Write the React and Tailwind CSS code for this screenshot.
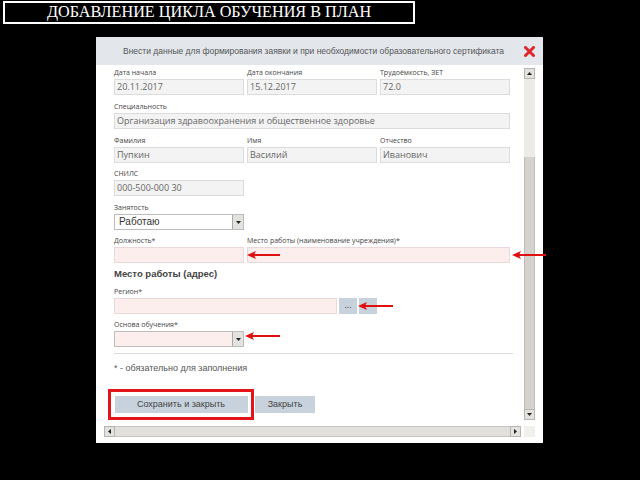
import React from 'react';

const ui = { fontFamily: '"Open Sans", "DejaVu Sans", sans-serif' };
const arial = { fontFamily: '"Liberation Sans", Arial, sans-serif' };

function Label({ children, className = '' }) {
  return (
    <div className={`h-[12px] text-[7px] leading-[12px] text-[#444] ${className}`}>{children}</div>
  );
}

function Field({ value = '', w = 'w-[130px]', tone = 'gray' }) {
  const bg = tone === 'pink' ? 'bg-[#fdeeee] border-[#ecd8d8]' : 'bg-[#f3f3f3] border-[#dcdcdc]';
  return (
    <div className={`h-[16px] ${w} border ${bg} px-[2px] text-[9px] leading-[14px] text-[#666] whitespace-nowrap`}>{value}</div>
  );
}

function Select({ value = '', tone = 'white' }) {
  const bg = tone === 'pink' ? 'bg-[#fdeeee]' : 'bg-white';
  return (
    <div className={`h-[16px] w-[130px] border border-[#bdbdbd] ${bg} flex`}>
      <div className="flex-1 px-[4px] text-[10px] leading-[14px] text-[#333]" style={arial}>{value}</div>
      <div className="w-[11px] h-[14px] bg-[#e4e2de] border-l border-[#a9a9a9] flex items-center justify-center">
        <svg width="5" height="3" viewBox="0 0 5 3"><path d="M0 0h5L2.5 3z" fill="#222" /></svg>
      </div>
    </div>
  );
}

function Arrow({ x1, x2, y }) {
  return (
    <g>
      <line x1={x1 + 6} y1={y} x2={x2} y2={y} stroke="#e01010" strokeWidth="2" />
      <path d={`M${x1} ${y} L${x1 + 9} ${y - 4} L${x1 + 7} ${y} L${x1 + 9} ${y + 4} Z`} fill="#e01010" />
    </g>
  );
}

export default function App() {
  return (
    <div className="relative w-[640px] h-[480px] bg-black overflow-hidden" style={ui}>
      {/* slide title */}
      <div className="ml-[3px] mt-[1px] w-[412px] h-[23px] border-2 border-white flex items-center justify-center">
        <span className="text-white text-[16.2px] leading-none" style={{ fontFamily: '"Liberation Serif", serif' }}>
          ДОБАВЛЕНИЕ ЦИКЛА ОБУЧЕНИЯ В ПЛАН
        </span>
      </div>

      {/* dialog */}
      <div className="ml-[96px] mt-[13px] w-[447px] h-[406px] bg-white flex flex-col">
        <div className="h-[28px] bg-[#e3e7ec] flex items-center">
          <div className="flex-1 text-center text-[8.5px] text-[#555] pl-[16px] whitespace-nowrap" style={arial}>
            Внести данные для формирования заявки и при необходимости образовательного сертификата
          </div>
          <div className="w-[28px] flex justify-center">
            <svg width="11" height="11" viewBox="0 0 11 11">
              <path d="M1.5 1.5L9.5 9.5M9.5 1.5L1.5 9.5" stroke="#e0252b" strokeWidth="3" strokeLinecap="round" />
            </svg>
          </div>
        </div>

        <div className="flex pl-[8px] pr-[8px]">
          <div className="w-[420px] h-[357px] overflow-hidden pl-[10px] pt-[2px]">
            <div className="flex gap-[3px]">
              <div>
                <Label>Дата начала</Label>
                <Field value="20.11.2017" />
              </div>
              <div>
                <Label>Дата окончания</Label>
                <Field value="15.12.2017" />
              </div>
              <div>
                <Label>Трудоёмкость, ЗЕТ</Label>
                <Field value="72.0" />
              </div>
            </div>

            <Label className="mt-[6px]">Специальность</Label>
            <Field w="w-[396px]" value="Организация здравоохранения и общественное здоровье" />

            <div className="flex gap-[3px] mt-[6px]">
              <div>
                <Label>Фамилия</Label>
                <Field value="Пупкин" />
              </div>
              <div>
                <Label>Имя</Label>
                <Field value="Василий" />
              </div>
              <div>
                <Label>Отчество</Label>
                <Field value="Иванович" />
              </div>
            </div>

            <Label className="mt-[5px]">СНИЛС</Label>
            <Field value="000-500-000 30" />

            <Label className="mt-[6px]">Занятость</Label>
            <Select value="Работаю" />

            <div className="flex gap-[3px] mt-[5px]">
              <div>
                <Label>Должность*</Label>
                <Field tone="pink" />
              </div>
              <div>
                <Label>Место работы (наименование учреждения)*</Label>
                <Field tone="pink" w="w-[263px]" />
              </div>
            </div>

            <div className="mt-[3px] h-[16px] text-[9.5px] leading-[16px] font-bold text-[#444]" style={arial}>Место работы (адрес)</div>

            <Label className="mt-[4px]">Регион*</Label>
            <div className="flex gap-[2px]">
              <Field tone="pink" w="w-[223px]" />
              <div className="w-[18px] h-[16px] bg-[#c8d2dc] text-[9px] leading-[14px] text-center text-[#444]">...</div>
              <div className="w-[18px] h-[16px] bg-[#c8d2dc]" />
            </div>

            <Label className="mt-[5px]">Основа обучения*</Label>
            <Select tone="pink" />

            <div className="mt-[6px] w-[399px] border-t border-[#dcdcdc]" />
            <div className="mt-[7px] text-[9px] leading-[14px] text-[#555]" style={arial}>* - обязательно для заполнения</div>

            <div className="mt-[14px] -ml-[6px] flex items-center" style={arial}>
              <div className="w-[146px] h-[31px] border-[3px] border-[#e3151b] flex items-center justify-center">
                <div className="w-[133px] h-[17px] bg-[#c8d2dc] text-[9px] leading-[17px] text-center text-[#444]">
                  Сохранить и закрыть
                </div>
              </div>
              <div className="ml-[1px] w-[60px] h-[17px] bg-[#c8d2dc] text-[9px] leading-[17px] text-center text-[#444]">
                Закрыть
              </div>
            </div>
          </div>

          {/* vertical scrollbar */}
          <div className="mt-[3px] w-[11px] h-[352px] bg-[#ecebe7] flex flex-col">
            <div className="h-[11px] bg-[#e4e2de] border border-[#b8b5b0] flex items-center justify-center">
              <svg width="5" height="3" viewBox="0 0 5 3"><path d="M0 3h5L2.5 0z" fill="#222" /></svg>
            </div>
            <div className="h-[78px]" />
            <div className="flex-1 bg-[#d5d2cd] border-x border-[#c0bdb8]" />
            <div className="h-[11px] bg-[#e4e2de] border border-[#b8b5b0] flex items-center justify-center">
              <svg width="5" height="3" viewBox="0 0 5 3"><path d="M0 0h5L2.5 3z" fill="#222" /></svg>
            </div>
          </div>
        </div>

        {/* horizontal scrollbar */}
        <div className="mt-[4px] ml-[8px] flex">
          <div className="w-[417px] h-[11px] bg-[#ecebe7] flex">
            <div className="w-[11px] bg-[#e4e2de] border border-[#b8b5b0] flex items-center justify-center">
              <svg width="3" height="5" viewBox="0 0 3 5"><path d="M3 0v5L0 2.5z" fill="#222" /></svg>
            </div>
            <div className="flex-1 bg-[#e2e0dc] border-y border-[#c8c5c0]" />
            <div className="w-[11px] bg-[#e4e2de] border border-[#b8b5b0] flex items-center justify-center">
              <svg width="3" height="5" viewBox="0 0 3 5"><path d="M0 0v5L3 2.5z" fill="#222" /></svg>
            </div>
          </div>
          <div className="ml-[3px] w-[11px] h-[11px] bg-[#f1f0ed]" />
        </div>
      </div>

      {/* red pointer arrows over the form */}
      <svg className="absolute left-0 top-0 pointer-events-none" width="640" height="480">
        <Arrow x1={247} x2={280} y={255} />
        <Arrow x1={512} x2={546} y={255} />
        <Arrow x1={358} x2={393} y={306} />
        <Arrow x1={245} x2={280} y={336} />
      </svg>
    </div>
  );
}
